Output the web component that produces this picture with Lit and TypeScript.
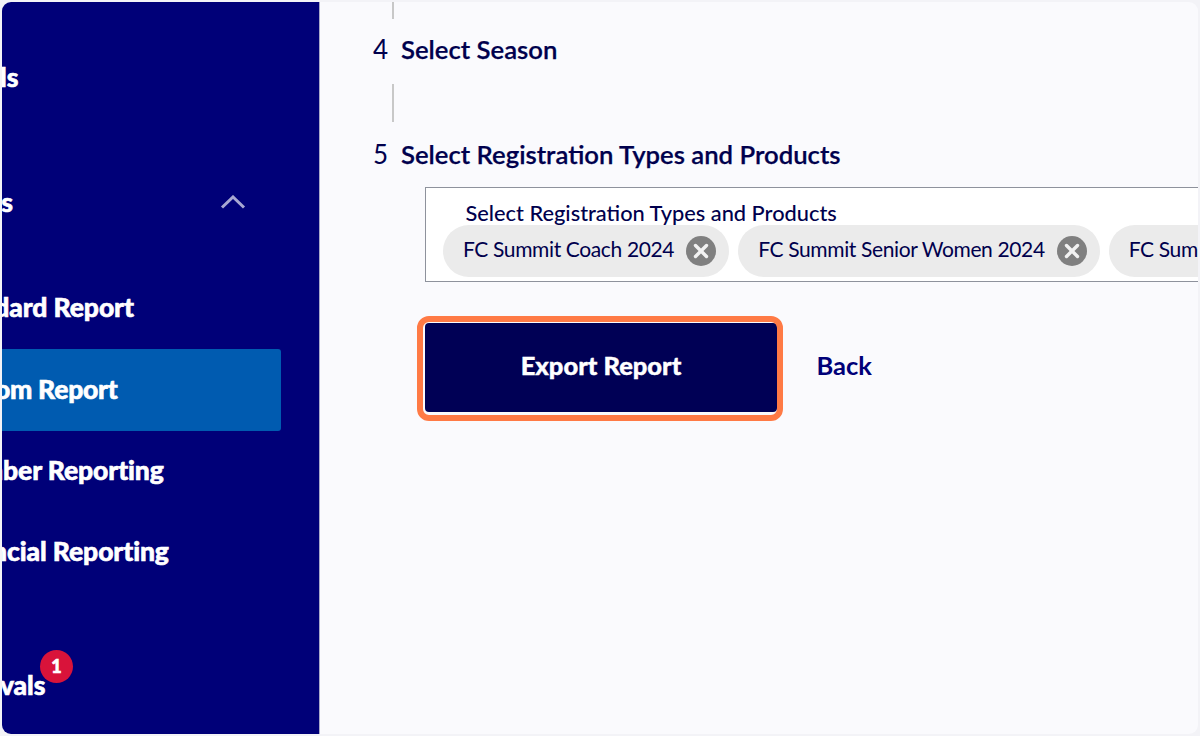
import { LitElement, html, css } from "lit";
import { customElement } from "lit/decorators.js";

@customElement("app-root")
export class AppRoot extends LitElement {
  static styles = css`
    :host { display: block; width: 1200px; height: 736px; background: #f3f3f7; padding: 2px; box-sizing: border-box; font-family: Lato, "Noto Sans", sans-serif; }
    .frame { display: flex; width: 100%; height: 100%; border-radius: 9px; overflow: hidden; background: #fafafd; }
    .side { width: 318px; flex: none; background: #000078; border-right: 1px solid #a9a9c8; box-sizing: border-box; overflow: hidden; color: #fff; font-weight: 900; font-size: 26.5px; letter-spacing: -0.1px; -webkit-text-stroke: 0.6px #fff; }
    .nav { margin-left: -76px; width: 394px; padding-top: 57px; display: flex; flex-direction: column; }
    .top { height: 36px; line-height: 36px; padding-left: 16px; white-space: nowrap; margin-left: -57px; }
    .group { display: flex; justify-content: space-between; align-items: center; margin-top: 89px; height: 36px; padding-right: 72px; padding-left: 16px; }
    .group span { margin-left: -21px; }
    .chev { width: 26px; height: 14px; display: block; margin-right: 2px; }
    .sub { height: 82px; display: flex; align-items: center; padding-left: 16px; padding-bottom: 5px; white-space: nowrap; box-sizing: border-box; }
    .sub.first { margin-top: 47px; padding-bottom: 3px; }
    .sub.last { padding-bottom: 6px; }
    .sub.on { background: #005bb0; border-radius: 3px; margin-right: 39px; padding-bottom: 3px; letter-spacing: -0.25px; }
    .appr { margin-top: 71.5px; height: 36px; line-height: 36px; padding-left: 16px; position: relative; white-space: nowrap; }
    .appr .t { margin-left: -15px; }
    .badge { position: absolute; left: 114px; top: -17px; width: 33px; height: 33px; border-radius: 50%; background: #d9133a; font-size: 18px; line-height: 33px; text-align: center; letter-spacing: 0; }
    .main { flex: 1; min-width: 0; overflow: hidden; padding-left: 53px; color: #00004d; }
    .line { width: 2px; background: #c8c8c8; margin-left: 19px; }
    .l1 { height: 17px; }
    .l2 { height: 38px; margin-top: 18px; }
    .step { display: flex; align-items: center; height: 32px; padding-bottom: 2px; box-sizing: border-box; font-size: 25.7px; font-weight: 600; white-space: nowrap; -webkit-text-stroke: 0.25px #00004d; }
    .s4 { margin-top: 15px; }
    .s5 { margin-top: 17px; }
    .num { width: 28px; font-weight: 400; font-size: 26px; -webkit-text-stroke: 0; }
    .box { margin: 16px 0 0 52px; height: 95px; box-sizing: border-box; width: 800px; background: #fff; border: 1.5px solid #8e929c; padding: 13px 0 0 17px; overflow: hidden; }
    .lbl { font-size: 21.8px; line-height: 24px; padding-left: 22.5px; font-weight: 500; height: 23.5px; white-space: nowrap; }
    .chips { display: flex; gap: 9px; white-space: nowrap; }
    .chip { flex: none; display: flex; align-items: center; height: 52px; border-radius: 26px; background: #ebebeb; padding: 0 13px 0 20px; font-size: 21px; letter-spacing: -0.37px; gap: 12px; box-sizing: border-box; }
    .chip span { padding-bottom: 5px; }
    .x { width: 30px; height: 30px; display: block; }
    .actions { display: flex; align-items: center; margin: 41px 0 0 52px; gap: 39.5px; }
    .btnwrap { position: relative; }
    .btn { display: block; width: 352px; height: 89px; box-sizing: border-box; border: 0; border-radius: 4px; background: #000055; color: #fff; font: 900 25.5px Lato, sans-serif; padding: 0 0 6px; -webkit-text-stroke: 0.4px #fff; }
    .mark { position: absolute; left: -8px; top: -7px; width: 366px; height: 105px; box-sizing: border-box; border: 6px solid #ff7a45; border-radius: 12px; }
    .back { font-size: 25.5px; font-weight: 700; color: #000078; padding-bottom: 5px; }
  `;

  private xIcon() {
    return html`<svg class="x" viewBox="0 0 30 30"><circle cx="15" cy="15" r="15" fill="#808080"/><path d="M9.5 9.5l11 11M20.5 9.5l-11 11" stroke="#f2f2f2" stroke-width="3.4" stroke-linecap="round"/></svg>`;
  }

  render() {
    return html`<div class="frame">
      <aside class="side"><div class="nav">
        <div class="top">Credentials</div>
        <div class="group"><span>Reports</span><svg class="chev" viewBox="0 0 26 14"><path d="M2 12.5L13 2l11 10.5" fill="none" stroke="#a7a7d2" stroke-width="3"/></svg></div>
        <div class="sub first">Standard Report</div>
        <div class="sub on">Custom Report</div>
        <div class="sub">Member Reporting</div>
        <div class="sub last">Financial Reporting</div>
        <div class="appr"><span class="t">Approvals</span><span class="badge">1</span></div>
      </div></aside>
      <main class="main">
        <div class="line l1"></div>
        <div class="step s4"><span class="num">4</span>Select Season</div>
        <div class="line l2"></div>
        <div class="step s5"><span class="num">5</span>Select Registration Types and Products</div>
        <div class="box">
          <div class="lbl">Select Registration Types and Products</div>
          <div class="chips">
            <div class="chip"><span>FC Summit Coach 2024</span> ${this.xIcon()}</div>
            <div class="chip"><span>FC Summit Senior Women 2024</span> ${this.xIcon()}</div>
            <div class="chip"><span>FC Summit Senior Men 2024</span> ${this.xIcon()}</div>
          </div>
        </div>
        <div class="actions">
          <div class="btnwrap"><button class="btn">Export Report</button><div class="mark"></div></div>
          <span class="back">Back</span>
        </div>
      </main>
    </div>`;
  }
}
